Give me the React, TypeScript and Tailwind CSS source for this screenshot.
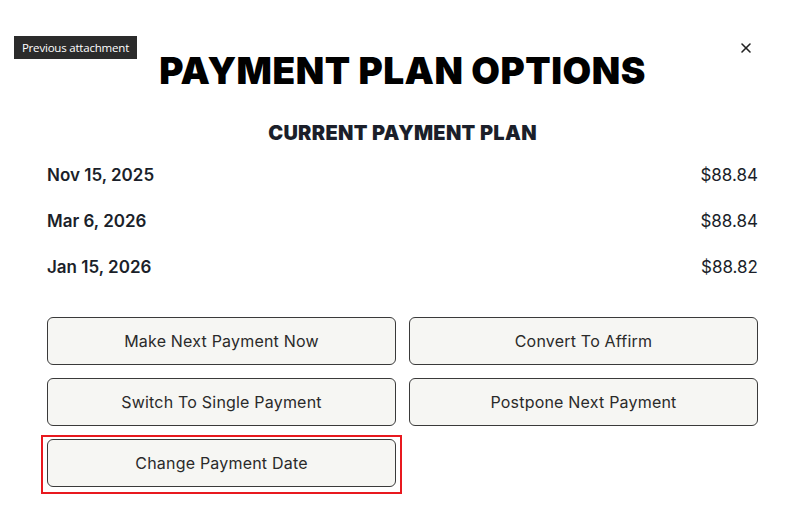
import { X } from "lucide-react";

const plan = [
  { date: "Nov 15, 2025", amount: "$88.84" },
  { date: "Mar 6, 2026", amount: "$88.84" },
  { date: "Jan 15, 2026", amount: "$88.82" },
];

const actions = [
  "Make Next Payment Now",
  "Convert To Affirm",
  "Switch To Single Payment",
  "Postpone Next Payment",
];

function ActionButton({ label }: { label: string }) {
  return (
    <button
      type="button"
      className="flex h-[48px] w-full items-center justify-center rounded-[6px] border border-[#3a3a3a] bg-[#f6f6f3] text-[16px] tracking-[0.2px] text-[#2a2a2a]"
    >
      {label}
    </button>
  );
}

export default function App() {
  return (
    <div
      className="relative h-[525px] w-[805px] overflow-hidden bg-white"
      style={{ fontFamily: "Inter, 'Open Sans', sans-serif" }}
    >
      {/* tooltip from the viewer, lies over the modal */}
      <div
        className="absolute left-[14px] top-[36px] z-10 flex h-[23px] w-[123px] items-center justify-center bg-[#2b2b2b] text-[11.5px] tracking-[-0.2px] text-white"
        style={{ fontFamily: "'Open Sans', sans-serif" }}
      >
        Previous attachment
      </div>

      <button type="button" className="absolute left-[738px] top-[40px] text-[#222]">
        <X size={16} strokeWidth={2.4} />
      </button>

      <div className="mx-auto flex w-[711px] flex-col pt-[51px]">
        <h1 className="text-center text-[37px] font-black leading-[40px] tracking-[0.5px] text-black">
          PAYMENT PLAN OPTIONS
        </h1>

        <h2 className="mt-[30px] text-center text-[20px] font-black leading-[24px] tracking-[0.3px] text-[#1b1f2a]">
          CURRENT PAYMENT PLAN
        </h2>

        <div className="mt-[8px] flex flex-col">
          {plan.map((p) => (
            <div key={p.date} className="flex h-[46px] items-center justify-between text-[#1b1f2a]">
              <span className="text-[17px] font-semibold">{p.date}</span>
              <span className="text-[17px] font-normal">{p.amount}</span>
            </div>
          ))}
        </div>

        <div className="mt-[26px] grid grid-cols-2 gap-x-[13px] gap-y-[13px]">
          {actions.map((a) => (
            <ActionButton key={a} label={a} />
          ))}
          <div className="relative">
            <ActionButton label="Change Payment Date" />
            <div className="pointer-events-none absolute -bottom-[7px] -left-[6px] -right-[6px] -top-[4px] border-2 border-[#e8191f]" />
          </div>
        </div>
      </div>
    </div>
  );
}
